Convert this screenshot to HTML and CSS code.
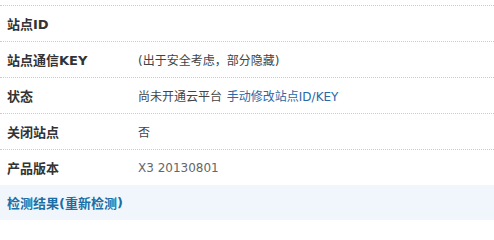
FILE: index.html
```html
<!DOCTYPE html>
<html lang="zh-CN">
<head>
<meta charset="utf-8">
<title>站点信息</title>
<link rel="stylesheet" href="styles.css">
</head>
<body>
<div class="info">
  <div class="row">
    <div class="label">站点ID</div>
    <div class="value"></div>
  </div>
  <div class="row">
    <div class="label">站点通信KEY</div>
    <div class="value">(出于安全考虑，部分隐藏)</div>
  </div>
  <div class="row">
    <div class="label">状态</div>
    <div class="value">尚未开通云平台 <a class="link" href="#">手动修改站点ID/KEY</a></div>
  </div>
  <div class="row">
    <div class="label">关闭站点</div>
    <div class="value">否</div>
  </div>
  <div class="row">
    <div class="label">产品版本</div>
    <div class="value light">X3 20130801</div>
  </div>
  <div class="header">检测结果(<a class="hlink" href="#">重新检测</a>)</div>
</div>
</body>
</html>
```
FILE: styles.css
```css
html, body {
  margin: 0;
  padding: 0;
  background: #fff;
}
body {
  font-family: "DejaVu Sans", Verdana, "Noto Sans CJK SC", sans-serif;
  font-size: 12px;
  color: #444;
}
.info {
  margin-top: 5px;
}
.row {
  display: grid;
  grid-template-columns: 138px 1fr;
  align-items: center;
  height: 35px;
  border-top: 1px dotted #c8cdd2;
}
.label {
  padding-left: 7px;
  font-size: 13px;
  font-weight: bold;
  color: #333;
  white-space: nowrap;
}
.value {
  color: #444;
  white-space: nowrap;
}
.value.light {
  color: #666;
}
.link {
  color: #2a68a8;
  text-decoration: none;
  margin-left: 1px;
}
.header {
  height: 35px;
  display: flex;
  align-items: center;
  padding-left: 7px;
  background: #f1f6fc;
  font-size: 13px;
  font-weight: bold;
  color: #1c6ea4;
}
.hlink {
  color: #1c6ea4;
  text-decoration: none;
}
```
